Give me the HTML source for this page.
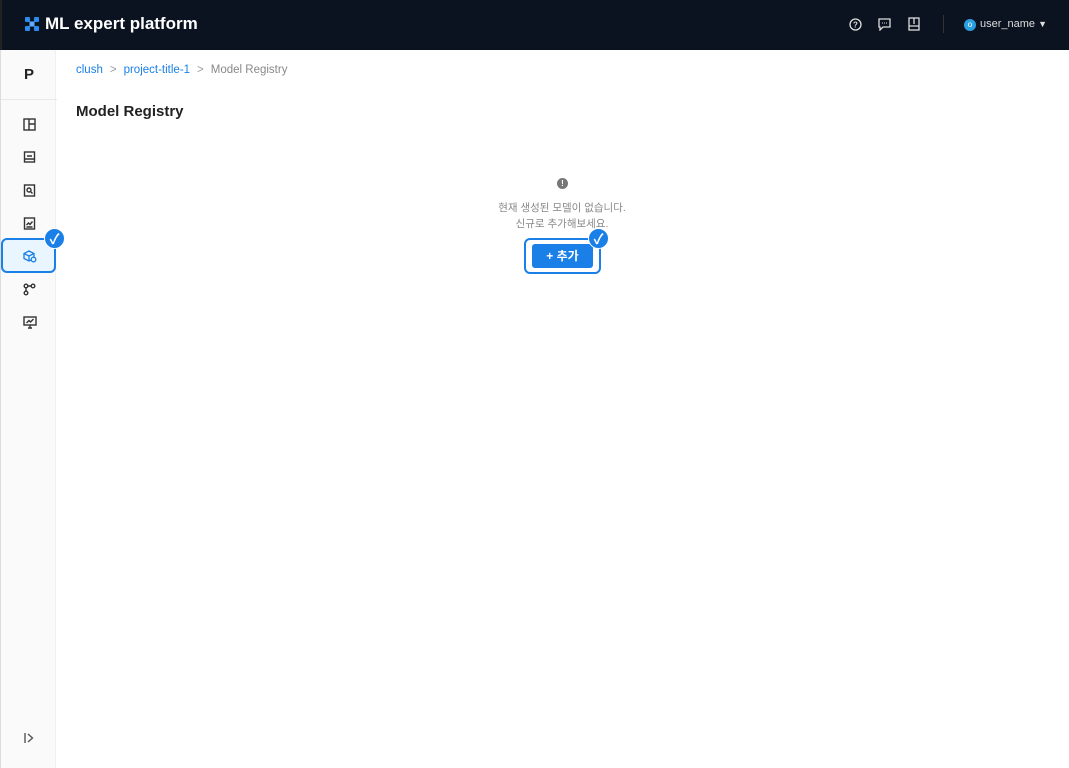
<!DOCTYPE html>
<html><head><meta charset="utf-8"><style>
*{margin:0;padding:0;box-sizing:border-box}
body{width:1069px;height:768px;overflow:hidden;background:#fff;font-family:"Liberation Sans","Noto Sans CJK KR",sans-serif;position:relative}
.hdr{position:absolute;left:0;top:0;width:1069px;height:50px;background:#0b1320;border-left:2px solid #222;}
.logo{position:absolute;left:22px;top:14px;color:#fff;font-size:17px;font-weight:bold;display:flex;align-items:center;gap:5px}
.side{position:absolute;left:0;top:50px;width:56px;height:718px;background:#fafafa;border-right:1px solid #f0f0f0;border-left:1px solid #ddd}
.p{position:absolute;left:0;top:0;width:56px;height:50px;border-bottom:1px solid #e8e8e8;text-align:center;line-height:50px;font-weight:bold;font-size:15px;color:#222}
.ic{position:absolute;left:22px}
.sel{position:absolute;left:0px;top:188px;width:55px;height:35px;border:2.5px solid #1a7fe6;border-radius:6px;background:#e9f6ff}
.chk{position:absolute;width:21px;height:21px;border-radius:50%;background:#1a7fe6;color:#fff;font-size:14px;text-align:center;line-height:21px;font-weight:bold;border:1.5px solid #fff}
.bc{position:absolute;left:76px;top:64px;font-size:11.5px;color:#888}
.bc a{color:#1a7fe6;text-decoration:none}
.bc span.s{margin:0 7px;color:#999}
h1{position:absolute;left:76px;top:103px;font-size:15px;font-weight:bold;color:#222}
.msg{position:absolute;left:462px;top:200px;width:200px;text-align:center;font-size:10.5px;color:#888;line-height:16px}
</style></head><body>
<div class="hdr">
 <div class="logo"><svg width="16" height="16" viewBox="0 0 16 16"><g fill="#2a8cf0"><rect x="1" y="1" width="5" height="5" rx="1"/><rect x="10" y="1" width="5" height="5" rx="1"/><rect x="1" y="10" width="5" height="5" rx="1"/><rect x="10" y="10" width="5" height="5" rx="1"/><rect x="5.5" y="5.5" width="5" height="5" fill="#5fb0ff"/></g></svg>ML expert platform</div>
 <svg style="position:absolute;left:847px;top:18px" width="13" height="13" viewBox="0 0 13 13"><circle cx="6.5" cy="6.5" r="5.5" fill="none" stroke="#ddd" stroke-width="1.3"/><text x="6.5" y="9.5" font-size="8" fill="#ddd" text-anchor="middle" font-family="Liberation Sans" font-weight="bold">?</text></svg>
 <svg style="position:absolute;left:876px;top:18px" width="13" height="13" viewBox="0 0 13 13"><path d="M1 1h11v8H5l-3 3V9H1z" fill="none" stroke="#ddd" stroke-width="1.3"/><path d="M4 5h1M6 5h1M8 5h1" stroke="#ddd"/></svg>
 <svg style="position:absolute;left:906px;top:17px" width="12" height="14" viewBox="0 0 12 14"><rect x="1" y="1" width="10" height="12" fill="none" stroke="#ddd" stroke-width="1.3"/><path d="M6 1v6M1 9h10" stroke="#ddd" stroke-width="1.3"/></svg>
 <div style="position:absolute;left:941px;top:15px;width:1px;height:18px;background:#333"></div>
 <div style="position:absolute;left:962px;top:19px;width:12px;height:12px;border-radius:50%;background:#2a9fe0;color:#fff;font-size:8px;text-align:center;line-height:12px">o</div>
 <div style="position:absolute;left:978px;top:18px;color:#ddd;font-size:11px">user_name <span style="font-size:9px">▼</span></div>
</div>
<div class="side">
 <div class="p">P</div>
 <div class="sel"></div>
 <svg class="ic" style="top:68px" width="13" height="13" viewBox="0 0 13 13" fill="none" stroke="#333" stroke-width="1.4"><rect x="1" y="1" width="11" height="11"/><path d="M6 1v11M6 6h6"/></svg>
 <svg class="ic" style="top:101px" width="13" height="13" viewBox="0 0 13 13" fill="none" stroke="#333" stroke-width="1.4"><rect x="1.5" y="1" width="10" height="10"/><path d="M1.5 8h10M4 5h5"/></svg>
 <svg class="ic" style="top:134px" width="13" height="13" viewBox="0 0 13 13" fill="none" stroke="#333" stroke-width="1.4"><rect x="1.5" y="1" width="10" height="11"/><circle cx="6" cy="6" r="2"/><path d="M7.5 7.5l2 2"/></svg>
 <svg class="ic" style="top:167px" width="13" height="13" viewBox="0 0 13 13" fill="none" stroke="#333" stroke-width="1.4"><rect x="1.5" y="1" width="10" height="11"/><path d="M3.5 8l2-2 1.5 1.5 2.5-3M3.5 10h6"/></svg>
 <svg class="ic" style="top:200px" width="14" height="13" viewBox="0 0 14 13" fill="none" stroke="#1a7fe6" stroke-width="1.3"><path d="M6 1l5 2.5v5L6 11 1 8.5v-5z"/><path d="M1 3.5L6 6l5-2.5M6 6v5"/><circle cx="10.5" cy="9.5" r="2.3" fill="#e9f6ff"/></svg>
 <svg class="ic" style="top:233px" width="13" height="13" viewBox="0 0 13 13" fill="none" stroke="#333" stroke-width="1.4"><circle cx="3" cy="3" r="1.8"/><circle cx="10" cy="3" r="1.8"/><circle cx="3" cy="10" r="1.8"/><path d="M3 5v3M5 3h3"/></svg>
 <svg class="ic" style="top:266px" width="14" height="13" viewBox="0 0 14 13" fill="none" stroke="#333" stroke-width="1.4"><rect x="1" y="1" width="12" height="8"/><path d="M3.5 7l2.5-2.5 1.5 1.5 3-3M5 12h4M7 9v3"/></svg>
 <svg class="ic" style="top:682px" width="12" height="12" viewBox="0 0 12 12" fill="none" stroke="#555" stroke-width="1.4"><path d="M2 1v10M5 2l4.5 4L5 10"/></svg>
</div>
<div class="chk" style="left:44px;top:228px">✓</div>
<div class="bc"><a>clush</a><span class="s">&gt;</span><a>project-title-1</a><span class="s">&gt;</span>Model Registry</div>
<h1>Model Registry</h1>
<div style="position:absolute;left:557px;top:178px;width:11px;height:11px;border-radius:50%;background:#777;color:#fff;font-size:8px;text-align:center;line-height:11px;font-weight:bold">!</div>
<div class="msg">현재 생성된 모델이 없습니다.<br>신규로 추가해보세요.</div>
<div style="position:absolute;left:524px;top:238px;width:77px;height:36px;border:2.5px solid #1a7fe6;border-radius:6px;background:#fff"></div>
<div style="position:absolute;left:532px;top:244px;width:61px;height:24px;background:#1a7fe6;border-radius:3px;color:#fff;font-size:12px;font-weight:bold;text-align:center;line-height:24px">+ 추가</div>
<div class="chk" style="left:588px;top:228px">✓</div>
</body></html>
